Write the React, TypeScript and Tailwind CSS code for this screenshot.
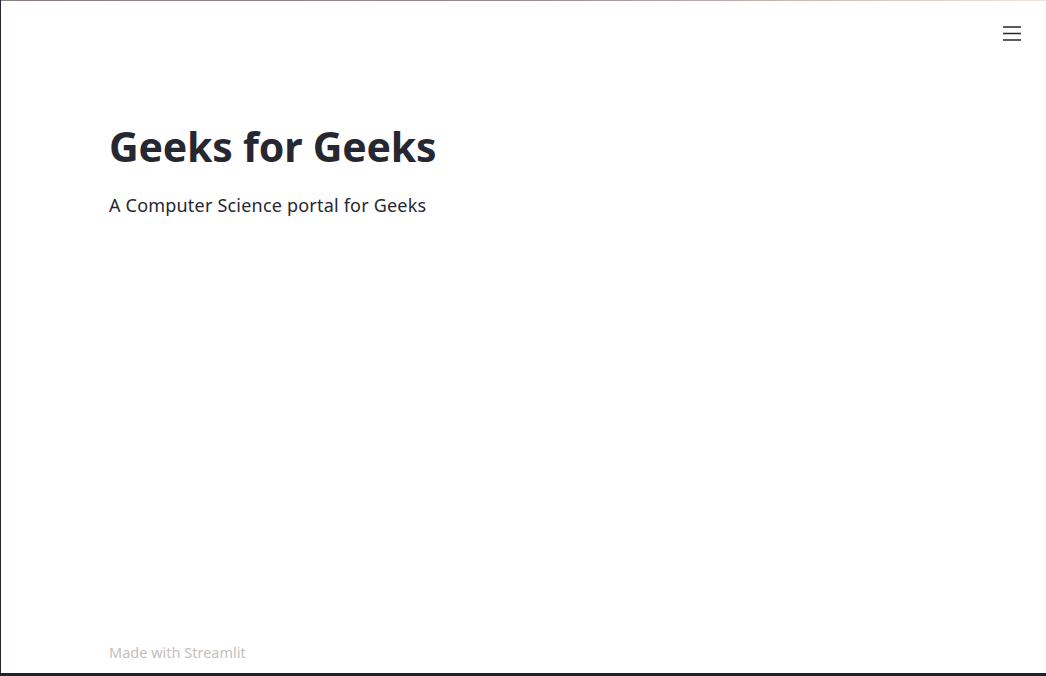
export default function App() {
  return (
    <main className="h-[676px] w-[1046px] overflow-hidden bg-[#262730] font-['Noto_Sans',sans-serif]">
      <div className="flex h-[673px] flex-col bg-white ml-px">
        {/* Decoration bar */}
        <div className="h-px bg-gradient-to-r from-[#8a7f80] via-[#9a8e8c] to-[#f0e6dc]" />

        {/* Header */}
        <header className="flex h-[65px] items-center justify-end pr-[25px]">
          <svg width="18" height="15" viewBox="0 0 18 15" className="text-[#262730]">
            <path d="M0.5 1h17M0.5 7.5h17M0.5 14h17" stroke="currentColor" strokeWidth="1.6" strokeLinecap="round" />
          </svg>
        </header>

        {/* Content */}
        <section className="flex flex-1 flex-col pl-[108px] pt-[60px]">
          <h1 className="text-[41px] font-bold leading-none tracking-[-0.2px] text-[#262730]">
            Geeks for Geeks
          </h1>
          <p className="mt-[29px] text-[18px] leading-none tracking-[0.2px] text-[#262730]">
            A Computer Science portal for Geeks
          </p>
        </section>

        {/* Footer */}
        <footer className="pb-[9px] pl-[108px]">
          <span className="text-[14.5px] text-[#c4c0bb]">Made with Streamlit</span>
        </footer>
      </div>
      <div className="h-[3px] bg-[#1f2328]" />
    </main>
  );
}
